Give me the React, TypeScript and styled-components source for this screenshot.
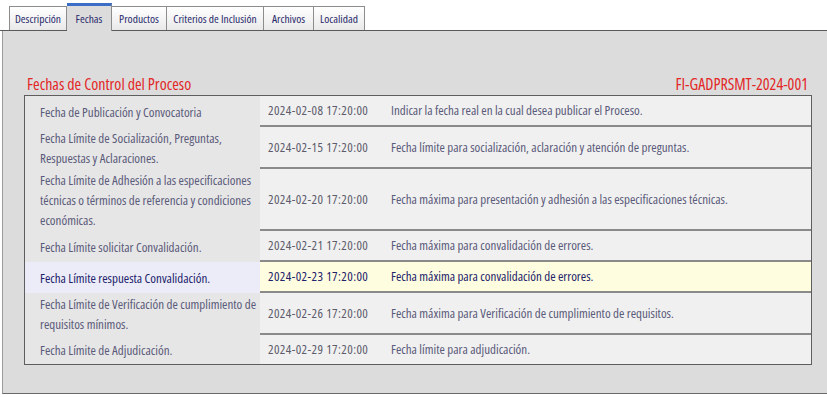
import React from "react";
import styled, { createGlobalStyle } from "styled-components";

const Global = createGlobalStyle`
  html, body { margin: 0; padding: 0; background: #ffffff; }
  body { font-family: "Open Sans", "DejaVu Sans Condensed", sans-serif; font-stretch: 75%; }
`;

const Page = styled.div`
  width: 827px;
  height: 397px;
  background: #ffffff;
  padding-top: 3px;
  box-sizing: border-box;
`;

const TabBar = styled.div`
  display: flex;
  align-items: flex-end;
  padding-left: 9px;
  height: 27px;
  border-bottom: 1px solid #5a5a5a;
`;

const Tab = styled.div<{ $active?: boolean; $w: number }>`
  width: ${(p) => p.$w}px;
  height: ${(p) => (p.$active ? "28px" : "24px")};
  display: flex;
  align-items: center;
  justify-content: center;
  box-sizing: border-box;
  font-size: 11.5px;
  color: #2a2a6c;
  border: 1px solid #8c8c8c;
  border-bottom: none;
  margin-bottom: ${(p) => (p.$active ? "-1px" : "0")};
  border-top: ${(p) => (p.$active ? "3px solid #3b6dc6" : "1px solid #8c8c8c")};
  background: ${(p) => (p.$active ? "#dcdcdc" : "linear-gradient(#ffffff, #e9e9e9)")};
  & + & { border-left: none; }
`;

const Panel = styled.div`
  margin-left: 2px;
  height: 363px;
  box-sizing: border-box;
  background: #dcdcdc;
  border-left: 1px solid #9a9a9a;
  border-bottom: 1px solid #6a6a6a;
  padding: 42px 15px 0 21px;
`;

const Header = styled.div`
  display: flex;
  justify-content: space-between;
  align-items: flex-end;
  padding: 0 4px 0 3px;
  height: 21px;
  margin-bottom: 1px;
`;

const Title = styled.span`
  color: #e32626;
  font-size: 16px;
  line-height: 20px;
`;

const Table = styled.div`
  display: grid;
  grid-template-columns: 235px 120px 1fr;
  border: 1px solid #5e5e5e;
  background: #f0f0f0;
`;

const Label = styled.div<{ $hl?: boolean }>`
  background: ${(p) => (p.$hl ? "#ececf8" : "#e6e6e6")};
  color: ${(p) => (p.$hl ? "#22226a" : "#5a5a7a")};
  font-size: 13px;
  line-height: 20px;
  padding: 1px 2px 1px 15px;
  display: flex;
  align-items: center;
`;

const Cell = styled.div<{ $hl?: boolean; $last?: boolean; $date?: boolean }>`
  background: ${(p) => (p.$hl ? "#fffde0" : "#f0f0f0")};
  color: ${(p) => (p.$hl ? "#22226a" : p.$date ? "#5c5c6c" : "#5a5a7a")};
  font-size: 13px;
  line-height: 19px;
  letter-spacing: ${(p) => (p.$date ? "0.4px" : "0")};
  white-space: nowrap;
  padding: ${(p) => (p.$date ? "0 0 0 8px" : "0 0 0 11px")};
  display: flex;
  align-items: center;
  min-height: 29px;
  border-bottom: ${(p) => (p.$last ? "none" : "2px solid #8a8a8a")};
`;

const rows = [
  ["Fecha de Publicación y Convocatoria", "2024-02-08 17:20:00", "Indicar la fecha real en la cual desea publicar el Proceso."],
  ["Fecha Límite de Socialización, Preguntas, Respuestas y Aclaraciones.", "2024-02-15 17:20:00", "Fecha límite para socialización, aclaración y atención de preguntas."],
  ["Fecha Límite de Adhesión a las especificaciones técnicas o términos de referencia y condiciones económicas.", "2024-02-20 17:20:00", "Fecha máxima para presentación y adhesión a las especificaciones técnicas."],
  ["Fecha Límite solicitar Convalidación.", "2024-02-21 17:20:00", "Fecha máxima para convalidación de errores."],
  ["Fecha Límite respuesta Convalidación.", "2024-02-23 17:20:00", "Fecha máxima para convalidación de errores."],
  ["Fecha Límite de Verificación de cumplimiento de requisitos mínimos.", "2024-02-26 17:20:00", "Fecha máxima para Verificación de cumplimiento de requisitos."],
  ["Fecha Límite de Adjudicación.", "2024-02-29 17:20:00", "Fecha límite para adjudicación."],
];

const tabs = [
  { t: "Descripción", w: 58 },
  { t: "Fechas", w: 45 },
  { t: "Productos", w: 55 },
  { t: "Criterios de Inclusión", w: 97 },
  { t: "Archivos", w: 50 },
  { t: "Localidad", w: 51 },
];

export default function App() {
  return (
    <Page>
      <Global />
      <TabBar>
        {tabs.map((x) => (
          <Tab key={x.t} $active={x.t === "Fechas"} $w={x.w}>
            {x.t}
          </Tab>
        ))}
      </TabBar>
      <Panel>
        <Header>
          <Title>Fechas de Control del Proceso</Title>
          <Title>FI-GADPRSMT-2024-001</Title>
        </Header>
        <Table>
          {rows.map((r, i) => {
            const hl = i === 4;
            const last = i === rows.length - 1;
            return (
              <React.Fragment key={i}>
                <Label $hl={hl}>{r[0]}</Label>
                <Cell $hl={hl} $last={last} $date>{r[1]}</Cell>
                <Cell $hl={hl} $last={last}>{r[2]}</Cell>
              </React.Fragment>
            );
          })}
        </Table>
      </Panel>
    </Page>
  );
}
